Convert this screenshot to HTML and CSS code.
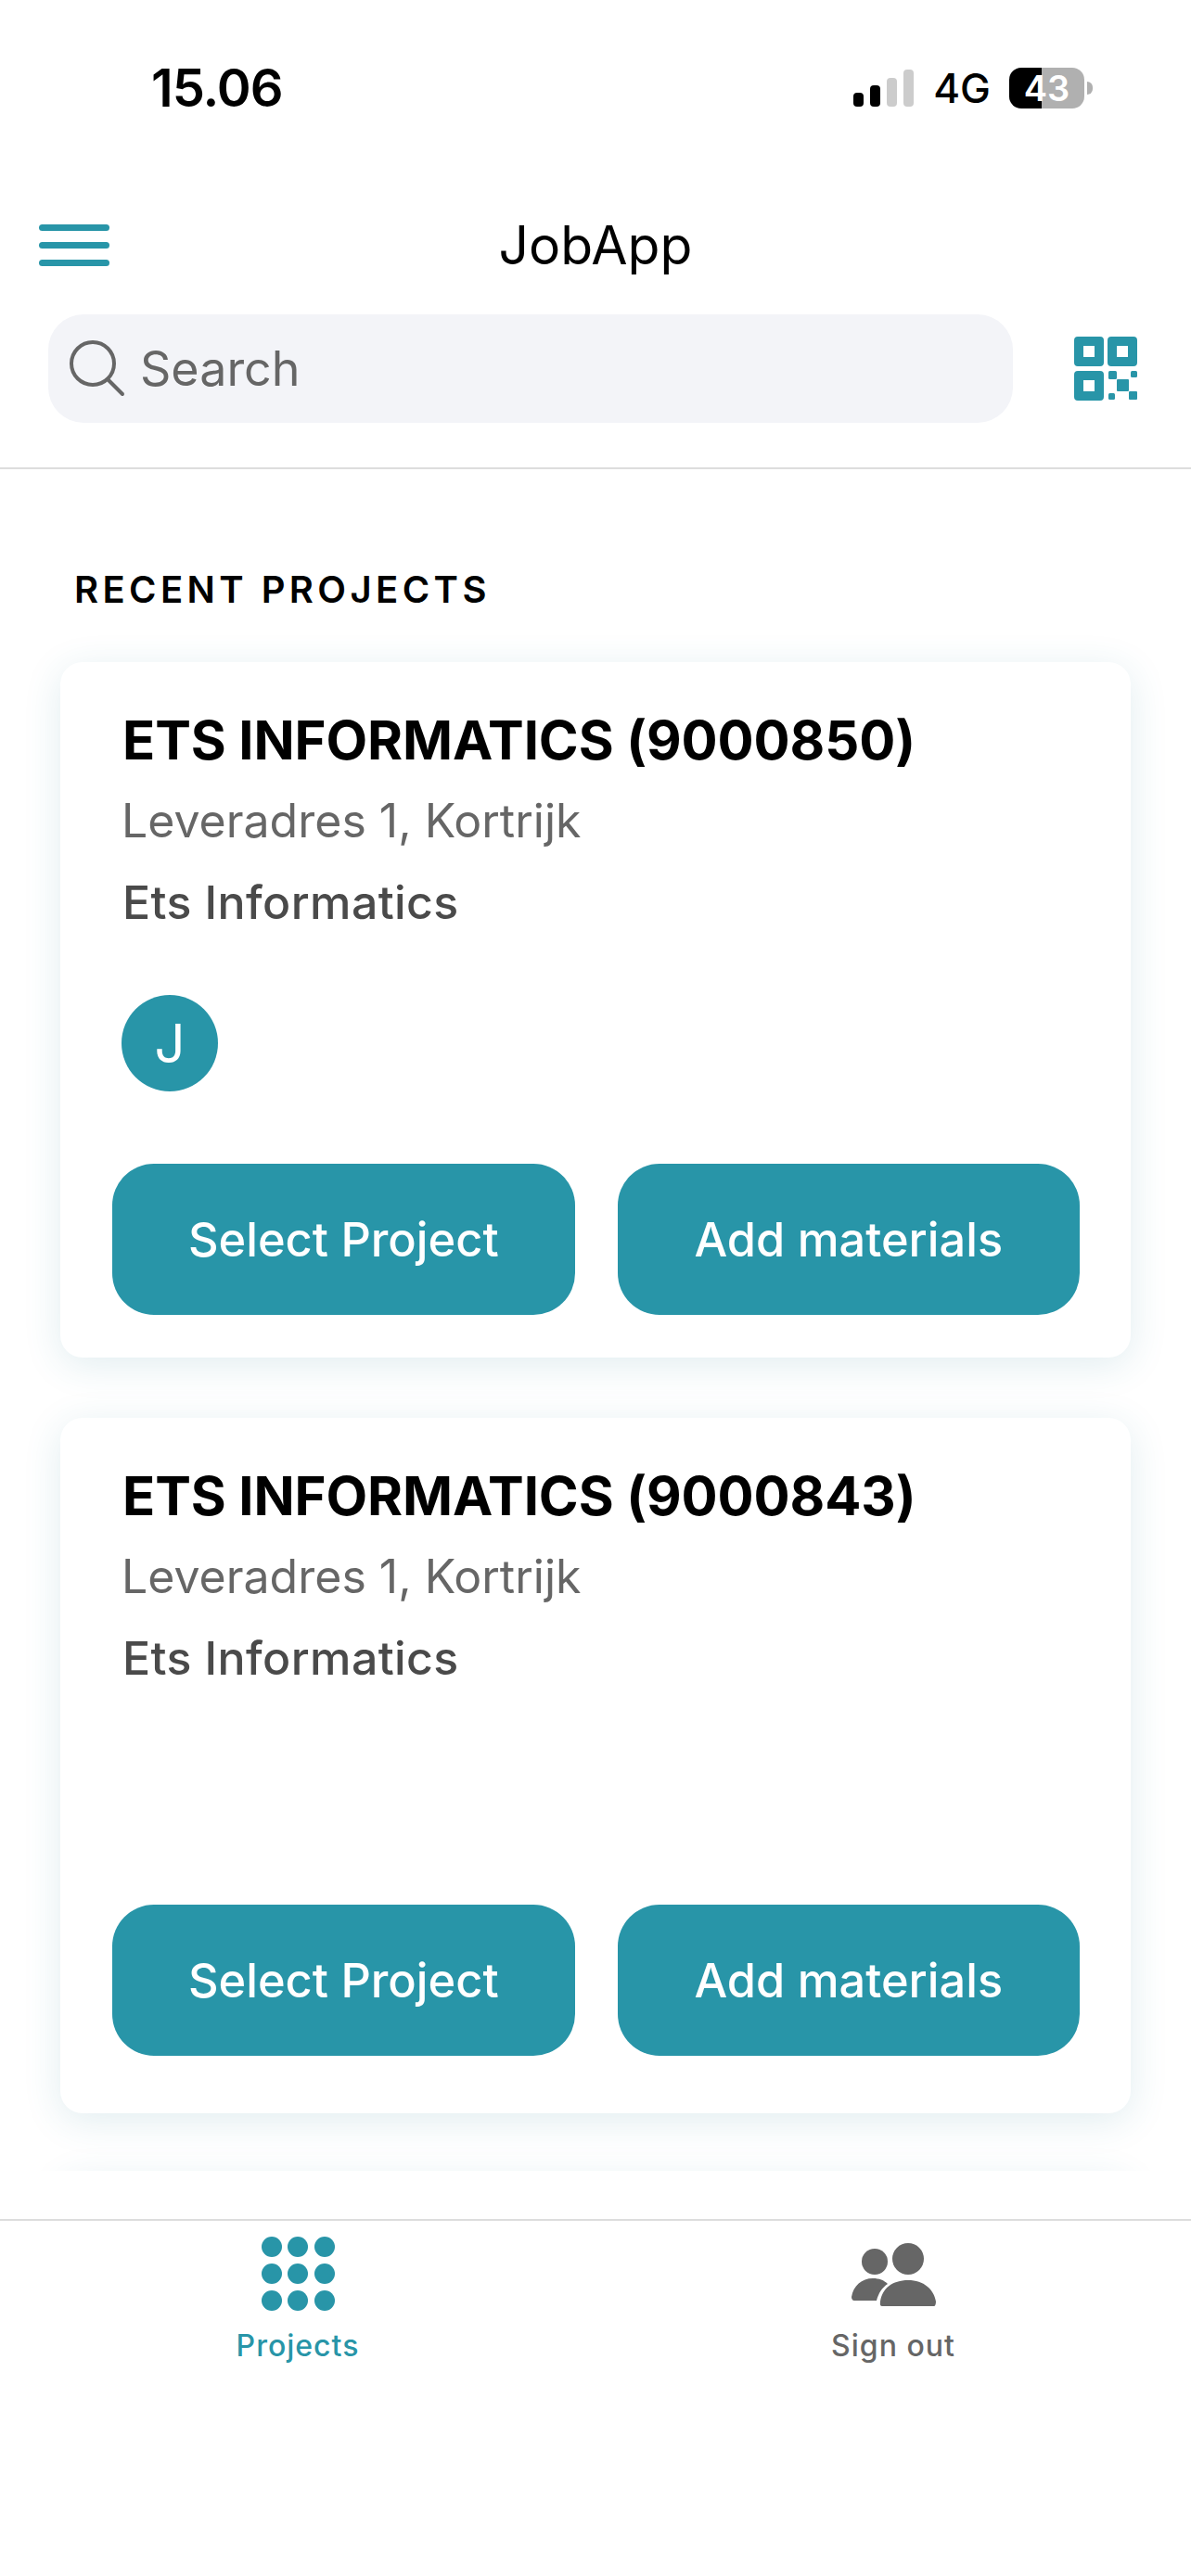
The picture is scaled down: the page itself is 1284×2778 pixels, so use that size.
FILE: index.html
```html
<!DOCTYPE html>
<html lang="en">
<head>
    <meta charset="UTF-8">
    <meta name="viewport" content="width=device-width, initial-scale=1.0">
    <title>JobApp</title>
    <link rel="stylesheet" href="styles.css">
</head>
<body>
    <header class="top">
        <div class="status-bar">
            <span class="clock">15.06</span>
            <div class="status-icons">
                <div class="signal">
                    <span class="bar bar-1"></span>
                    <span class="bar bar-2"></span>
                    <span class="bar bar-3"></span>
                    <span class="bar bar-4"></span>
                </div>
                <span class="network">4G</span>
                <div class="battery">43</div>
                <span class="battery-nub"></span>
            </div>
        </div>

        <div class="nav-row">
            <div class="hamburger">
                <span></span>
                <span></span>
                <span></span>
            </div>
            <h1 class="app-title">JobApp</h1>
        </div>

        <div class="search-row">
            <div class="search-box">
                <svg class="search-icon" width="60" height="62" viewBox="0 0 60 62" fill="none" stroke="#666" stroke-width="4" stroke-linecap="round">
                    <circle cx="25" cy="25" r="23"/>
                    <line x1="41" y1="42" x2="57" y2="58"/>
                </svg>
                <span class="search-text">Search</span>
            </div>
            <svg class="qr-icon" width="68" height="69" viewBox="0 0 68 69" fill="#2895a8">
                <path fill-rule="evenodd" d="M4 0h24a4 4 0 0 1 4 4v24a4 4 0 0 1-4 4H4a4 4 0 0 1-4-4V4a4 4 0 0 1 4-4zM10 10v12h12V10z"/>
                <path fill-rule="evenodd" d="M40 0h24a4 4 0 0 1 4 4v24a4 4 0 0 1-4 4H40a4 4 0 0 1-4-4V4a4 4 0 0 1 4-4zM46 10v12h12V10z"/>
                <path fill-rule="evenodd" d="M4 37h24a4 4 0 0 1 4 4v24a4 4 0 0 1-4 4H4a4 4 0 0 1-4-4V41a4 4 0 0 1 4-4zM10 47v12h12V47z"/>
                <rect x="37" y="37" width="9" height="9" rx="1.5"/>
                <rect x="61" y="37" width="7" height="7" rx="1.5"/>
                <rect x="46" y="46" width="13" height="13" rx="1"/>
                <rect x="37" y="61" width="7" height="7" rx="1.5"/>
                <rect x="59" y="59" width="9" height="9" rx="1"/>
            </svg>
        </div>
    </header>

    <main class="content">
        <h2 class="section-title">RECENT PROJECTS</h2>

        <section class="card">
            <h3 class="card-title">ETS INFORMATICS (9000850)</h3>
            <p class="card-address">Leveradres 1, Kortrijk</p>
            <p class="card-client">Ets Informatics</p>
            <div class="avatar">J</div>
            <div class="card-actions">
                <button class="btn">Select Project</button>
                <button class="btn">Add materials</button>
            </div>
        </section>

        <section class="card card-no-team">
            <h3 class="card-title">ETS INFORMATICS (9000843)</h3>
            <p class="card-address">Leveradres 1, Kortrijk</p>
            <p class="card-client">Ets Informatics</p>
            <div class="card-actions">
                <button class="btn">Select Project</button>
                <button class="btn">Add materials</button>
            </div>
        </section>

        <section class="card"></section>
    </main>

    <nav class="tabbar">
        <div class="tab tab-active">
            <div class="dots">
                <span></span><span></span><span></span>
                <span></span><span></span><span></span>
                <span></span><span></span><span></span>
            </div>
            <span class="tab-label">Projects</span>
        </div>
        <div class="tab">
            <svg class="people-icon" width="91" height="68" viewBox="0 0 91 68" fill="#666">
                <circle cx="25" cy="20" r="14"/>
                <circle cx="61" cy="17" r="17"/>
                <path d="M3 62C1 62 0 60 0 58C2 46 11 38 23 38C30 38 35 40 39 44C33 48 29 54 27 62Z"/>
                <path d="M33 68C31 68 30.500 66 31 63C33 49 44 40 61 40C78 40 89 50 91 63C91 66 90 68 89 68Z"/>
            </svg>
            <span class="tab-label">Sign out</span>
        </div>
    </nav>
</body>
</html>
```

FILE: styles.css
```css
:root {
    --primary: #2895a8;
    --text-grey: #666;
}

* {
    margin: 0;
    padding: 0;
    box-sizing: border-box;
    font-family: 'Inter', 'Liberation Sans', sans-serif;
}

body {
    width: 1284px;
    height: 2778px;
    background: white;
    color: black;
    overflow: hidden;
}

/* top part */
.top {
    height: 506px;
    border-bottom: 2px solid #ddd;
}

.status-bar {
    height: 190px;
    display: flex;
    justify-content: space-between;
    align-items: center;
    padding: 0 106px 0 163px;
}

.clock {
    font-size: 56px;
    font-weight: 600;
    letter-spacing: -1px;
}

.status-icons {
    display: flex;
    align-items: center;
}

.signal {
    display: flex;
    align-items: flex-end;
    gap: 7px;
    height: 40px;
    margin-right: 21px;
}

.bar {
    width: 11px;
    border-radius: 4px;
    background: #ccc;
}

.bar-1 { height: 15px; background: black; }
.bar-2 { height: 23px; background: black; }
.bar-3 { height: 31px; }
.bar-4 { height: 40px; }

.network {
    font-size: 44px;
    font-weight: 500;
    margin-right: 20px;
}

.battery {
    width: 81px;
    height: 44px;
    border-radius: 13px;
    background: linear-gradient(90deg, black 43%, #b0b0b0 43%);
    color: white;
    font-size: 38px;
    font-weight: 600;
    line-height: 44px;
    text-align: center;
}

.battery-nub {
    width: 6px;
    height: 14px;
    margin-left: 3px;
    border-radius: 0 7px 7px 0;
    background: #b0b0b0;
}

.nav-row {
    height: 149px;
    display: grid;
    grid-template-columns: 1fr auto 1fr;
    align-items: center;
    padding: 0 42px;
}

.hamburger {
    width: 76px;
    display: flex;
    flex-direction: column;
    gap: 12px;
}

.hamburger span {
    height: 7px;
    border-radius: 4px;
    background: var(--primary);
}

.app-title {
    font-size: 57px;
    font-weight: 400;
}

.search-row {
    display: flex;
    justify-content: space-between;
    align-items: center;
    padding: 0 58px 0 52px;
}

.search-box {
    width: 1040px;
    height: 117px;
    display: flex;
    align-items: center;
    gap: 16px;
    padding-left: 23px;
    border-radius: 38px;
    background: #f3f4f8;
}

.search-text {
    font-size: 52px;
    color: var(--text-grey);
}

/* projects list */
.content {
    height: 1835px;
    padding: 107px 65px 0;
    overflow: hidden;
}

.section-title {
    font-size: 40px;
    font-weight: 600;
    line-height: 46px;
    letter-spacing: 4.4px;
    margin: 0 0 55px 15px;
}

.card {
    height: 750px;
    display: flex;
    flex-direction: column;
    padding: 50px 55px 46px 56px;
    margin-bottom: 65px;
    border-radius: 24px;
    background: white;
    box-shadow: 0 8px 40px rgba(40, 130, 150, 0.14);
}

.card-no-team {
    padding-bottom: 62px;
}

.card-title {
    font-size: 58px;
    font-weight: 700;
    line-height: 68px;
    letter-spacing: -0.1px;
    padding-left: 11px;
}

.card-address {
    font-size: 50px;
    line-height: 60px;
    margin-top: 23px;
    padding-left: 10px;
    color: var(--text-grey);
}

.card-client {
    font-size: 50px;
    font-weight: 500;
    line-height: 60px;
    letter-spacing: 0.4px;
    margin-top: 28px;
    padding-left: 11px;
    color: #4a4a4a;
}

.avatar {
    width: 104px;
    height: 104px;
    display: flex;
    align-items: center;
    justify-content: center;
    margin: 70px 0 0 10px;
    border-radius: 50%;
    background: var(--primary);
    color: white;
    font-size: 58px;
    font-weight: 400;
}

.card-actions {
    display: flex;
    gap: 46px;
    margin-top: auto;
}

.btn {
    flex: 1;
    height: 163px;
    border: none;
    border-radius: 45px;
    background: var(--primary);
    color: white;
    font-size: 50.500px;
    font-weight: 500;
}

/* bottom tabs */
.tabbar {
    margin-top: 52px;
    padding-top: 17px;
    border-top: 2px solid #ddd;
    display: grid;
    grid-template-columns: 1fr 1fr;
}

.tab {
    height: 137px;
    display: flex;
    flex-direction: column;
    align-items: center;
    justify-content: space-between;
    color: var(--text-grey);
}

.tab-active {
    color: var(--primary);
}

.dots {
    display: grid;
    grid-template-columns: repeat(3, 22px);
    gap: 7px 6.500px;
}

.dots span {
    height: 22px;
    border-radius: 50%;
    background: var(--primary);
}

.people-icon {
    margin-top: 7px;
}

.tab-label {
    font-size: 32px;
    font-weight: 500;
    letter-spacing: 1px;
}
```
